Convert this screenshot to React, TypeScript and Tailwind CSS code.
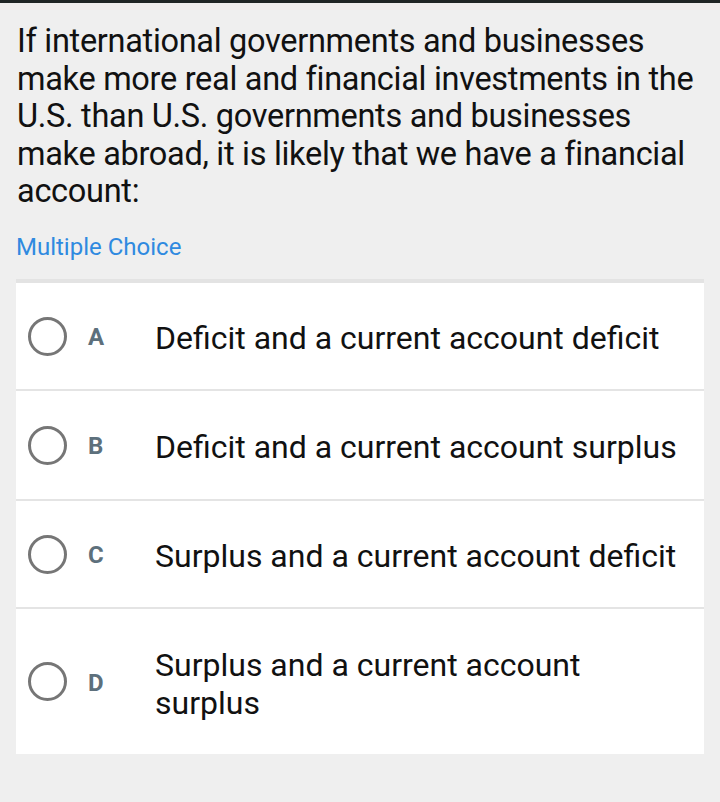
export default function App() {
  const opts = [
    { l: "A", t: "Deficit and a current account deficit", h: "h-[108px] border-b-[2px] border-[#e4e4e4]" },
    { l: "B", t: "Deficit and a current account surplus", h: "h-[110px] border-b-[2px] border-[#e4e4e4]" },
    { l: "C", t: "Surplus and a current account deficit", h: "h-[108px] border-b-[2px] border-[#e4e4e4]" },
    { l: "D", t: "Surplus and a current account surplus", h: "h-[145px]" },
  ];
  return (
    <div className="w-[720px] h-[802px] bg-[#efefef] flex flex-col" style={{ fontFamily: "Roboto, 'Noto Sans', sans-serif" }}>
      <div className="h-[3px] bg-[#1e2626]" />
      <div className="px-[17px] pt-[20px] pr-[14px] text-[32.5px] leading-[37.5px] text-[#111] tracking-[-0.3px]">
        If international governments and businesses make more real and financial investments in the U.S. than U.S. governments and businesses make abroad, it is likely that we have a financial account:
      </div>
      <div className="px-[16px] pt-[21px] text-[24px] leading-[30px] text-[#2f8ae0]">Multiple Choice</div>
      <div className="mx-[16px] mt-[17.5px] bg-white border-t-[4px] border-[#e3e3e3] flex flex-col">
        {opts.map((o, i) => (
          <div key={o.l} className={`flex items-center ${o.h}`}>
            <div className="ml-[12px] w-[39px] h-[39px] rounded-full border-[3px] border-[#767676] shrink-0" />
            <div className="w-[88px] pl-[21px] pt-[2px] text-[24px] font-bold text-[#5d707c] shrink-0">{o.l}</div>
            <div className={`pt-[4px] text-[32px] leading-[38px] text-[#111] ${i === 3 ? "w-[440px]" : ""}`}>{o.t}</div>
          </div>
        ))}
      </div>
    </div>
  );
}
